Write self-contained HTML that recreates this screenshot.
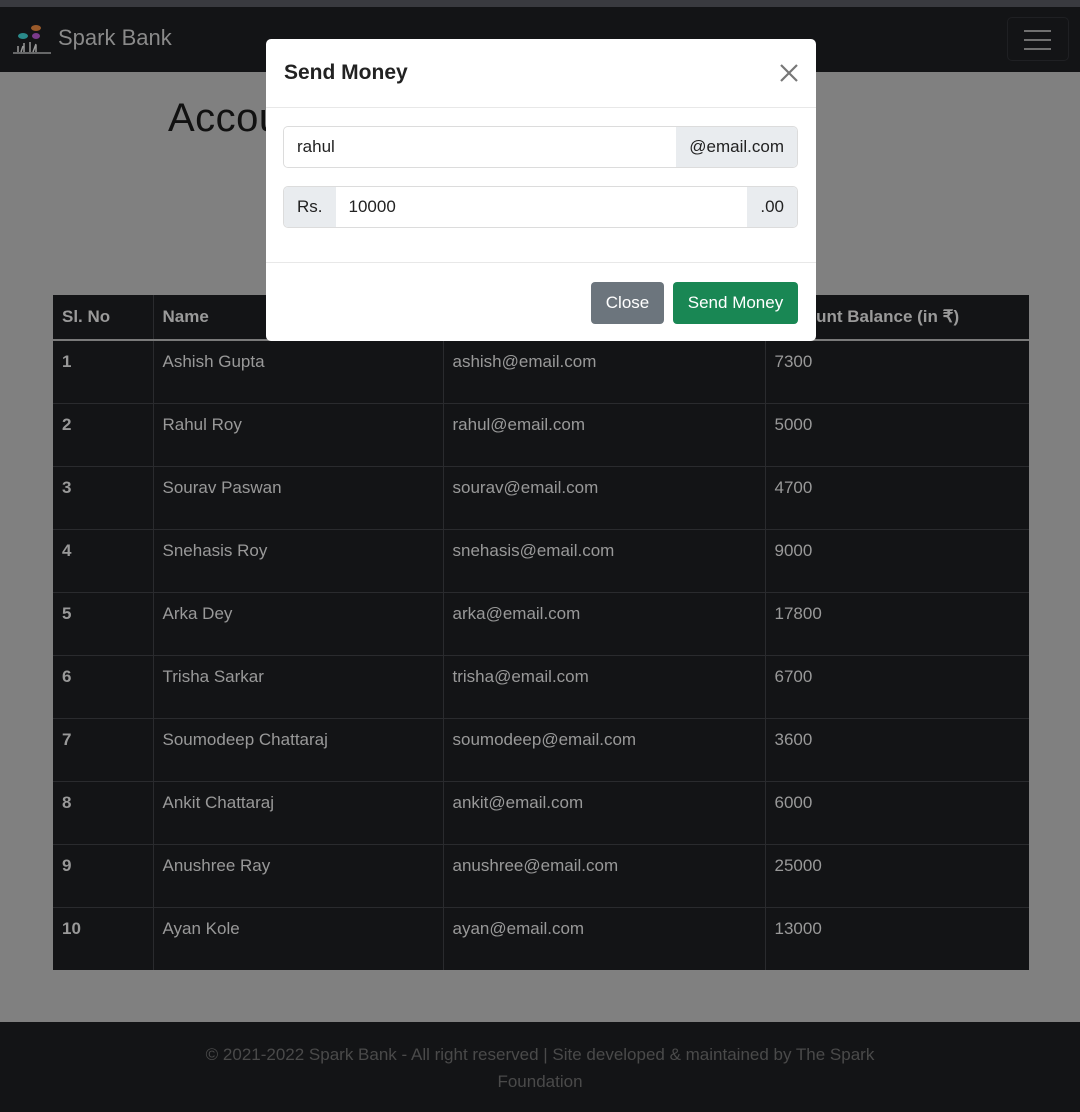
<!DOCTYPE html>
<html><head><style>
*{box-sizing:border-box;margin:0;padding:0}
body{width:1080px;height:1112px;background:#808080;font-family:"Liberation Sans",sans-serif;position:relative;overflow:hidden}
.top{position:absolute;left:0;top:0;width:1080px;height:7px;background:#393a3f}
.nav{position:absolute;left:0;top:7px;width:1080px;height:65px;background:#131416}
.brand{position:absolute;left:58px;top:18px;font-size:22px;color:#8a8a8a}
.tog{position:absolute;left:1007px;top:10px;width:62px;height:44px;border:1px solid #1f2023;border-radius:5px}
.tog i{position:absolute;left:16px;width:27px;height:2px;background:#707070}
h1{position:absolute;left:168px;top:96px;font-size:40px;font-weight:normal;color:#111;letter-spacing:0.5px}
table{position:absolute;left:53px;top:295px;width:976px;border-collapse:collapse;background:#131416;color:#999;font-size:17px}
th{text-align:left;height:45px;padding:0 9px;border-bottom:2px solid #7a7a7a;color:#9a9a9a;font-weight:bold}
td{height:63px;vertical-align:top;padding:11px 9px 0;border-top:1px solid #2a2b2e}
td+td,th+th{border-left:1px solid #2a2b2e}
td:first-child{font-weight:bold}
.foot{position:absolute;left:0;top:1022px;width:1080px;height:90px;background:#131416;color:#4a4a4a;font-size:17px;text-align:center;padding-top:19px;line-height:27px}
.modal{position:absolute;left:266px;top:39px;width:550px;height:302px;background:#fff;border-radius:5px}
.mh{height:69px;border-bottom:1px solid #e8e8e8;padding:22px 18px;font-size:21px;color:#222;font-weight:bold}
.x{position:absolute;right:17px;top:24px}
.ig{position:absolute;left:17px;height:42px;border:1px solid #dcdcdc;border-radius:5px;display:flex;font-size:17px;color:#222;overflow:hidden}
.ig span{background:#e9ecef;display:flex;align-items:center;padding:0 13px}
.ig div{flex:1;display:flex;align-items:center;padding:0 13px;background:#fff}
.mf{position:absolute;left:0;top:223px;width:550px;border-top:1px solid #e8e8e8}
.btn{position:absolute;top:243px;height:42px;border-radius:4px;color:#fff;font-size:17px;display:flex;align-items:center;justify-content:center}
</style></head><body>
<div class="top"></div>
<div class="nav">
<svg style="position:absolute;left:12px;top:17px" width="40" height="32" viewBox="0 0 40 32">
<ellipse cx="11" cy="12" rx="5" ry="3" fill="#2a8a8a"/><ellipse cx="24" cy="4" rx="5" ry="3" fill="#9a5a2a"/><ellipse cx="24" cy="12" rx="4" ry="3" fill="#7a3a8a"/>
<path d="M6 28v-6M12 28v-9M18 28v-10M24 28v-7M9 28l2-6M21 28l3-8" stroke="#999" stroke-width="1.5"/><path d="M1 29h38" stroke="#999" stroke-width="1.2"/></svg>
<div class="brand">Spark Bank</div>
<div class="tog"><i style="top:12px"></i><i style="top:21px"></i><i style="top:30px"></i></div>
</div>
<h1>Account Details of Rahul Banerjee</h1>
<table>
<tr><th style="width:100px">Sl. No</th><th style="width:290px">Name</th><th style="width:322px">Email</th><th>Account Balance (in ₹)</th></tr>
<tr><td>1</td><td>Ashish Gupta</td><td>ashish@email.com</td><td>7300</td></tr>
<tr><td>2</td><td>Rahul Roy</td><td>rahul@email.com</td><td>5000</td></tr>
<tr><td>3</td><td>Sourav Paswan</td><td>sourav@email.com</td><td>4700</td></tr>
<tr><td>4</td><td>Snehasis Roy</td><td>snehasis@email.com</td><td>9000</td></tr>
<tr><td>5</td><td>Arka Dey</td><td>arka@email.com</td><td>17800</td></tr>
<tr><td>6</td><td>Trisha Sarkar</td><td>trisha@email.com</td><td>6700</td></tr>
<tr><td>7</td><td>Soumodeep Chattaraj</td><td>soumodeep@email.com</td><td>3600</td></tr>
<tr><td>8</td><td>Ankit Chattaraj</td><td>ankit@email.com</td><td>6000</td></tr>
<tr><td>9</td><td>Anushree Ray</td><td>anushree@email.com</td><td>25000</td></tr>
<tr><td>10</td><td>Ayan Kole</td><td>ayan@email.com</td><td>13000</td></tr>
</table>
<div class="foot">© 2021-2022 Spark Bank - All right reserved | Site developed &amp; maintained by The Spark<br>Foundation</div>
<div class="modal">
<div class="mh">Send Money</div>
<svg class="x" width="20" height="20" viewBox="0 0 20 20"><path d="M2 2L18 18M18 2L2 18" stroke="#777" stroke-width="2.2"/></svg>
<div class="ig" style="top:87px;width:515px"><div>rahul</div><span>@email.com</span></div>
<div class="ig" style="top:147px;width:515px"><span>Rs.</span><div>10000</div><span>.00</span></div>
<div class="mf"></div>
<div class="btn" style="left:325px;width:73px;background:#6c757d">Close</div>
<div class="btn" style="left:407px;width:125px;background:#198754">Send Money</div>
</div>
</body></html>
